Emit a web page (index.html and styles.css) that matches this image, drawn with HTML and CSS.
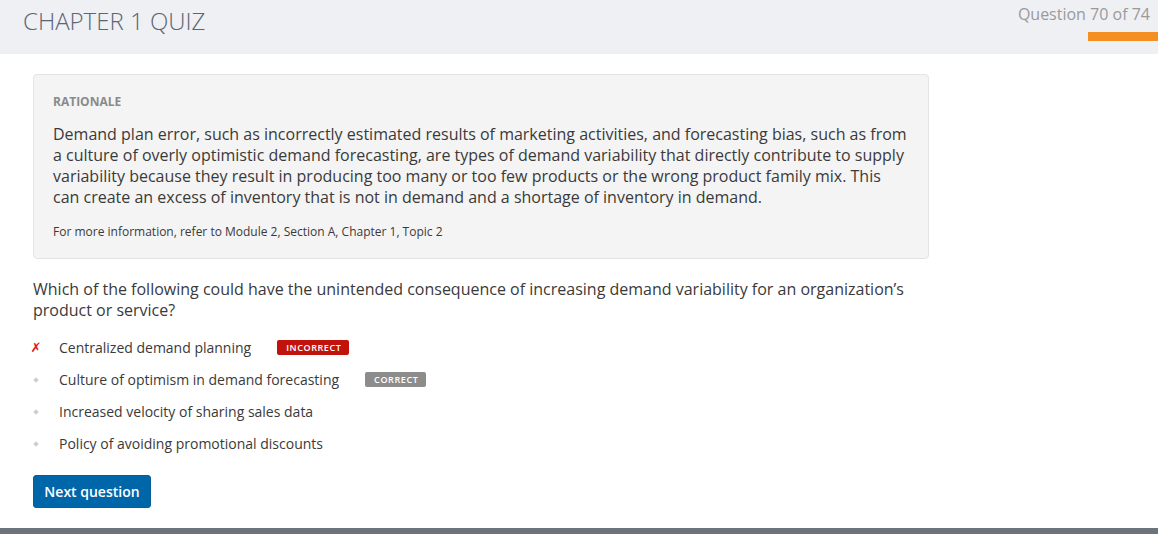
FILE: index.html
```html
<!DOCTYPE html>
<html lang="en">
<head>
<meta charset="utf-8">
<title>Chapter 1 Quiz</title>
<link rel="stylesheet" href="styles.css">
</head>
<body>
<header class="topbar">
  <h1 class="quiz-title">CHAPTER 1 QUIZ</h1>
  <div class="progress">
    <div class="progress-label">Question 70 of 74</div>
    <div class="progress-bar"></div>
  </div>
</header>
<main class="content">
  <section class="rationale">
    <h2 class="rationale-title">RATIONALE</h2>
    <p class="rationale-text">Demand plan error, such as incorrectly estimated results of marketing activities, and forecasting bias, such as from a culture of overly optimistic demand forecasting, are types of demand variability that directly contribute to supply variability because they result in producing too many or too few products or the wrong product family mix. This can create an excess of inventory that is not in demand and a shortage of inventory in demand.</p>
    <p class="rationale-ref">For more information, refer to Module 2, Section A, Chapter 1, Topic 2</p>
  </section>
  <p class="question">Which of the following could have the unintended consequence of increasing demand variability for an organization’s product or service?</p>
  <ul class="options">
    <li class="option"><span class="mark mark-wrong">✗</span><span class="option-text">Centralized demand planning</span><span class="badge badge-incorrect">INCORRECT</span></li>
    <li class="option"><span class="mark"><span class="dot"></span></span><span class="option-text">Culture of optimism in demand forecasting</span><span class="badge badge-correct">CORRECT</span></li>
    <li class="option"><span class="mark"><span class="dot"></span></span><span class="option-text">Increased velocity of sharing sales data</span></li>
    <li class="option"><span class="mark"><span class="dot"></span></span><span class="option-text">Policy of avoiding promotional discounts</span></li>
  </ul>
  <button class="next-btn" type="button">Next question</button>
</main>
<footer class="bottombar"></footer>
</body>
</html>
```

FILE: styles.css
```css
* { box-sizing: border-box; }
html, body { margin: 0; padding: 0; }
body {
  font-family: "Open Sans", "Liberation Sans", sans-serif;
  background: #ffffff;
  color: #3a3a3a;
  width: 1158px;
  height: 534px;
  overflow: hidden;
  display: flex;
  flex-direction: column;
}
.topbar {
  height: 54px;
  background: #eff0f4;
  display: flex;
  justify-content: space-between;
  align-items: flex-start;
  flex-shrink: 0;
}
.quiz-title {
  margin: 6px 0 0 23px;
  font-size: 24px;
  font-weight: 300;
  line-height: 30px;
  color: #5b6573;
}
.progress {
  display: flex;
  flex-direction: column;
  align-items: flex-end;
  padding-top: 4px;
}
.progress-label {
  font-size: 16px;
  line-height: 20px;
  color: #9a9a9a;
  margin-right: 8px;
}
.progress-bar {
  margin-top: 8px;
  width: 70px;
  height: 9px;
  background: #f39021;
}
.content {
  flex: 1;
  padding: 20px 0 0 33px;
  width: 929px;
}
.rationale {
  background: #f4f4f4;
  border: 1px solid #e3e3e3;
  border-radius: 4px;
  padding: 19px 19px 18px 19px;
  height: 185px;
}
.rationale-title {
  margin: 0;
  font-size: 12px;
  font-weight: 700;
  line-height: 16px;
  color: #8a8a8a;
}
.rationale-text {
  margin: 14px 0 0;
  font-size: 16px;
  line-height: 21px;
  color: #3a3a3a;
}
.rationale-ref {
  margin: 16px 0 0;
  font-size: 12px;
  line-height: 16px;
  color: #3a3a3a;
}
.question {
  margin: 20px 0 0;
  font-size: 16px;
  line-height: 21px;
  color: #3a3a3a;
  width: 890px;
}
.options {
  list-style: none;
  margin: 11px 0 0;
  padding: 0;
}
.option {
  height: 32px;
  display: flex;
  align-items: center;
  font-size: 14px;
  color: #3a3a3a;
}
.mark {
  display: flex;
  justify-content: center;
  padding-right: 20px;
  box-sizing: content-box;
  width: 6px;
}
.mark-wrong {
  color: #e8141a;
  font-size: 13px;
  font-weight: 700;
  line-height: 14px;
  font-family: "DejaVu Sans", sans-serif;
}
.dot {
  display: block;
  width: 4px;
  height: 4px;
  background: #cfcfcf;
  transform: rotate(45deg);
}
.option-text { line-height: 20px; }
.badge {
  margin-left: 26px;
  font-size: 9px;
  font-weight: 600;
  letter-spacing: 0.6px;
  color: #ffffff;
  line-height: 15px;
  height: 15px;
  padding: 0 8px 0 9px;
  border-radius: 2px;
  position: relative;
  top: -1px;
}
.badge-incorrect { background: #c1130c; }
.badge-correct { background: #8c8c8c; }
.next-btn {
  margin-top: 15px;
  width: 118px;
  height: 33px;
  background: #0066aa;
  border: 1px solid #0a5d95;
  border-radius: 3px;
  color: #ffffff;
  font-family: "Open Sans", "Liberation Sans", sans-serif;
  font-size: 14px;
  font-weight: 600;
  padding: 0;
}
.bottombar {
  height: 6px;
  background: #6c737a;
  flex-shrink: 0;
}
```
